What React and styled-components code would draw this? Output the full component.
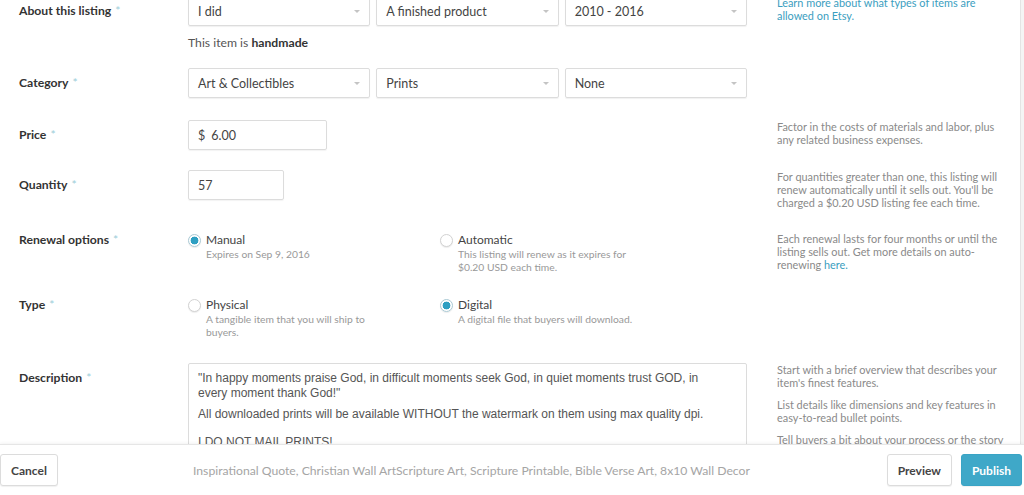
import styled, { createGlobalStyle } from "styled-components";

const GlobalStyle = createGlobalStyle`
  html, body {
    margin: 0;
    padding: 0;
    background: #f4f4f4;
  }
  body {
    font-family: Lato, "Liberation Sans", sans-serif;
    color: #444;
  }
`;

const Page = styled.div`
  width: 1024px;
  height: 495px;
  display: flex;
  flex-direction: column;
  overflow: hidden;
`;

const Scroller = styled.div`
  flex: 1;
  overflow: hidden;
  width: 1020px;
  background: #fff;
  border-right: 1px solid #e4e4e4;
`;

const Form = styled.div`
  margin-top: -4px;
  display: flex;
  flex-direction: column;
`;

const Row = styled.div`
  display: grid;
  grid-template-columns: 188px 559px 262px;
  align-items: start;
  margin-bottom: ${(p) => p.$space || 20}px;
`;

const Label = styled.div`
  padding-left: 19px;
  padding-top: ${(p) => (p.$flat ? 0 : 7)}px;
  font-size: 12.2px;
  line-height: 16px;
  font-weight: 700;
  color: #333;
  span {
    color: #9ccdd9;
    font-weight: 400;
    margin-left: 4px;
  }
`;

const Field = styled.div`
  display: flex;
  flex-direction: column;
`;

const SelectGroup = styled.div`
  display: grid;
  grid-template-columns: repeat(3, 1fr);
  gap: 6px;
`;

const Select = styled.div`
  position: relative;
  height: 30px;
  box-sizing: border-box;
  border: 1px solid #dcdcdc;
  border-radius: 2px;
  box-shadow: 0 1px 1px rgba(0, 0, 0, 0.06);
  padding: 0 20px 0 9px;
  display: flex;
  align-items: center;
  font-size: 12.5px;
  color: #444;
  &::after {
    content: "";
    position: absolute;
    right: 9px;
    top: 13px;
    border-left: 3px solid transparent;
    border-right: 3px solid transparent;
    border-top: 3px solid #c4c4c4;
  }
`;

const Note = styled.div`
  margin-top: 9px;
  font-size: 12.2px;
  line-height: 16px;
  color: #555;
  b {
    color: #333;
  }
`;

const Input = styled.div`
  width: ${(p) => p.$w}px;
  height: 30px;
  box-sizing: border-box;
  border: 1px solid #dcdcdc;
  border-radius: 2px;
  box-shadow: 0 1px 1px rgba(0, 0, 0, 0.05);
  padding: 0 9px;
  display: flex;
  align-items: center;
  gap: 6px;
  font-size: 12.5px;
  color: #444;
`;

const Options = styled.div`
  display: grid;
  grid-template-columns: 252px 252px;
  align-items: start;
`;

const Option = styled.div`
  display: grid;
  grid-template-columns: 13px 1fr;
  column-gap: 5px;
  align-items: start;
`;

const Radio = styled.div`
  width: 13px;
  height: 13px;
  margin-top: 2px;
  box-sizing: border-box;
  border-radius: 50%;
  border: 1px solid ${(p) => (p.$on ? "#a9c9d4" : "#d2d2d2")};
  background: ${(p) =>
    p.$on ? "radial-gradient(circle, #2e9fc2 0 3.6px, #fff 4.2px)" : "#fff"};
  box-shadow: 0 1px 1px rgba(0, 0, 0, 0.08);
`;

const OptionTitle = styled.div`
  font-size: 12px;
  line-height: 16px;
  color: #444;
`;

const OptionSub = styled.div`
  grid-column: 2;
  font-size: 10.3px;
  line-height: 13px;
  color: #999;
  max-width: ${(p) => p.$w || 172}px;
`;

const Help = styled.div`
  padding-left: 30px;
  font-size: 10.9px;
  line-height: 13px;
  color: #8a8a8a;
  p {
    margin: 0 0 9px;
  }
  a {
    color: #3b9ec0;
    text-decoration: none;
  }
`;

const TextArea = styled.div`
  box-sizing: border-box;
  border: 1px solid #dcdcdc;
  border-radius: 2px;
  padding: 7px 30px 7px 9px;
  font-family: "Liberation Sans", Arial, sans-serif;
  font-size: 12px;
  line-height: 15px;
  color: #555;
  height: 140px;
  p {
    margin: 0 0 6px;
  }
  p + p + p {
    margin-top: 13px;
  }
`;

const Footer = styled.div`
  height: 51px;
  flex-shrink: 0;
  box-sizing: border-box;
  background: #fff;
  border-top: 1px solid #e6e6e6;
  box-shadow: 0 -1px 3px rgba(0, 0, 0, 0.05);
  display: grid;
  grid-template-columns: 188px 1fr auto;
  align-items: center;
  padding-right: 2px;
`;

const Button = styled.button`
  height: 32px;
  box-sizing: border-box;
  padding: 0 10px;
  border-radius: 3px;
  border: 1px solid ${(p) => (p.$primary ? "#3aa4c5" : "#dcdcdc")};
  background: ${(p) => (p.$primary ? "#3fa8c8" : "#fff")};
  color: ${(p) => (p.$primary ? "#fff" : "#444")};
  font-family: inherit;
  font-size: 12px;
  font-weight: 700;
  box-shadow: 0 1px 1px rgba(0, 0, 0, 0.06);
`;

const Tags = styled.div`
  padding-left: 5px;
  font-size: 12.2px;
  color: #a5a5a5;
  white-space: nowrap;
`;

const Actions = styled.div`
  display: flex;
  gap: 9px;
`;

const Req = () => <span>*</span>;

export default function App() {
  return (
    <Page>
      <GlobalStyle />
      <Scroller>
        <Form>
          <Row $space={17}>
            <Label>
              About this listing<Req />
            </Label>
            <Field>
              <SelectGroup>
                <Select>I did</Select>
                <Select>A finished product</Select>
                <Select>2010 - 2016</Select>
              </SelectGroup>
              <Note>
                This item is <b>handmade</b>
              </Note>
            </Field>
            <Help>
              <a>Learn more about what types of items are allowed on Etsy.</a>
            </Help>
          </Row>

          <Row $space={22}>
            <Label>
              Category<Req />
            </Label>
            <SelectGroup>
              <Select>Art &amp; Collectibles</Select>
              <Select>Prints</Select>
              <Select>None</Select>
            </SelectGroup>
            <Help />
          </Row>

          <Row $space={20}>
            <Label>
              Price<Req />
            </Label>
            <Input $w={139}>
              <span>$</span>
              <span>6.00</span>
            </Input>
            <Help>
              Factor in the costs of materials and labor, plus any related business
              expenses.
            </Help>
          </Row>

          <Row $space={23}>
            <Label>
              Quantity<Req />
            </Label>
            <Input $w={96}>57</Input>
            <Help>
              For quantities greater than one, this listing will renew automatically
              until it sells out. You'll be charged a $0.20 USD listing fee each time.
            </Help>
          </Row>

          <Row $space={23}>
            <Label $flat>
              Renewal options<Req />
            </Label>
            <Options>
              <Option>
                <Radio $on />
                <OptionTitle>Manual</OptionTitle>
                <OptionSub>Expires on Sep 9, 2016</OptionSub>
              </Option>
              <Option>
                <Radio />
                <OptionTitle>Automatic</OptionTitle>
                <OptionSub>
                  This listing will renew as it expires for $0.20 USD each time.
                </OptionSub>
              </Option>
            </Options>
            <Help>
              Each renewal lasts for four months or until the listing sells out. Get
              more details on auto-renewing <a>here.</a>
            </Help>
          </Row>

          <Row $space={24}>
            <Label $flat>
              Type<Req />
            </Label>
            <Options>
              <Option>
                <Radio />
                <OptionTitle>Physical</OptionTitle>
                <OptionSub>A tangible item that you will ship to buyers.</OptionSub>
              </Option>
              <Option>
                <Radio $on />
                <OptionTitle>Digital</OptionTitle>
                <OptionSub $w={240}>A digital file that buyers will download.</OptionSub>
              </Option>
            </Options>
            <Help />
          </Row>

          <Row $space={0}>
            <Label>
              Description<Req />
            </Label>
            <TextArea>
              <p>
                "In happy moments praise God, in difficult moments seek God, in quiet
                moments trust GOD, in every moment thank God!"
              </p>
              <p>
                All downloaded prints will be available WITHOUT the watermark on them
                using max quality dpi.
              </p>
              <p>I DO NOT MAIL PRINTS!</p>
            </TextArea>
            <Help>
              <p>Start with a brief overview that describes your item's finest features.</p>
              <p>List details like dimensions and key features in easy-to-read bullet points.</p>
              <p>Tell buyers a bit about your process or the story behind this item.</p>
            </Help>
          </Row>
        </Form>
      </Scroller>
      <Footer>
        <div>
          <Button>Cancel</Button>
        </div>
        <Tags>
          Inspirational Quote, Christian Wall ArtScripture Art, Scripture Printable,
          Bible Verse Art, 8x10 Wall Decor
        </Tags>
        <Actions>
          <Button>Preview</Button>
          <Button $primary>Publish</Button>
        </Actions>
      </Footer>
    </Page>
  );
}
